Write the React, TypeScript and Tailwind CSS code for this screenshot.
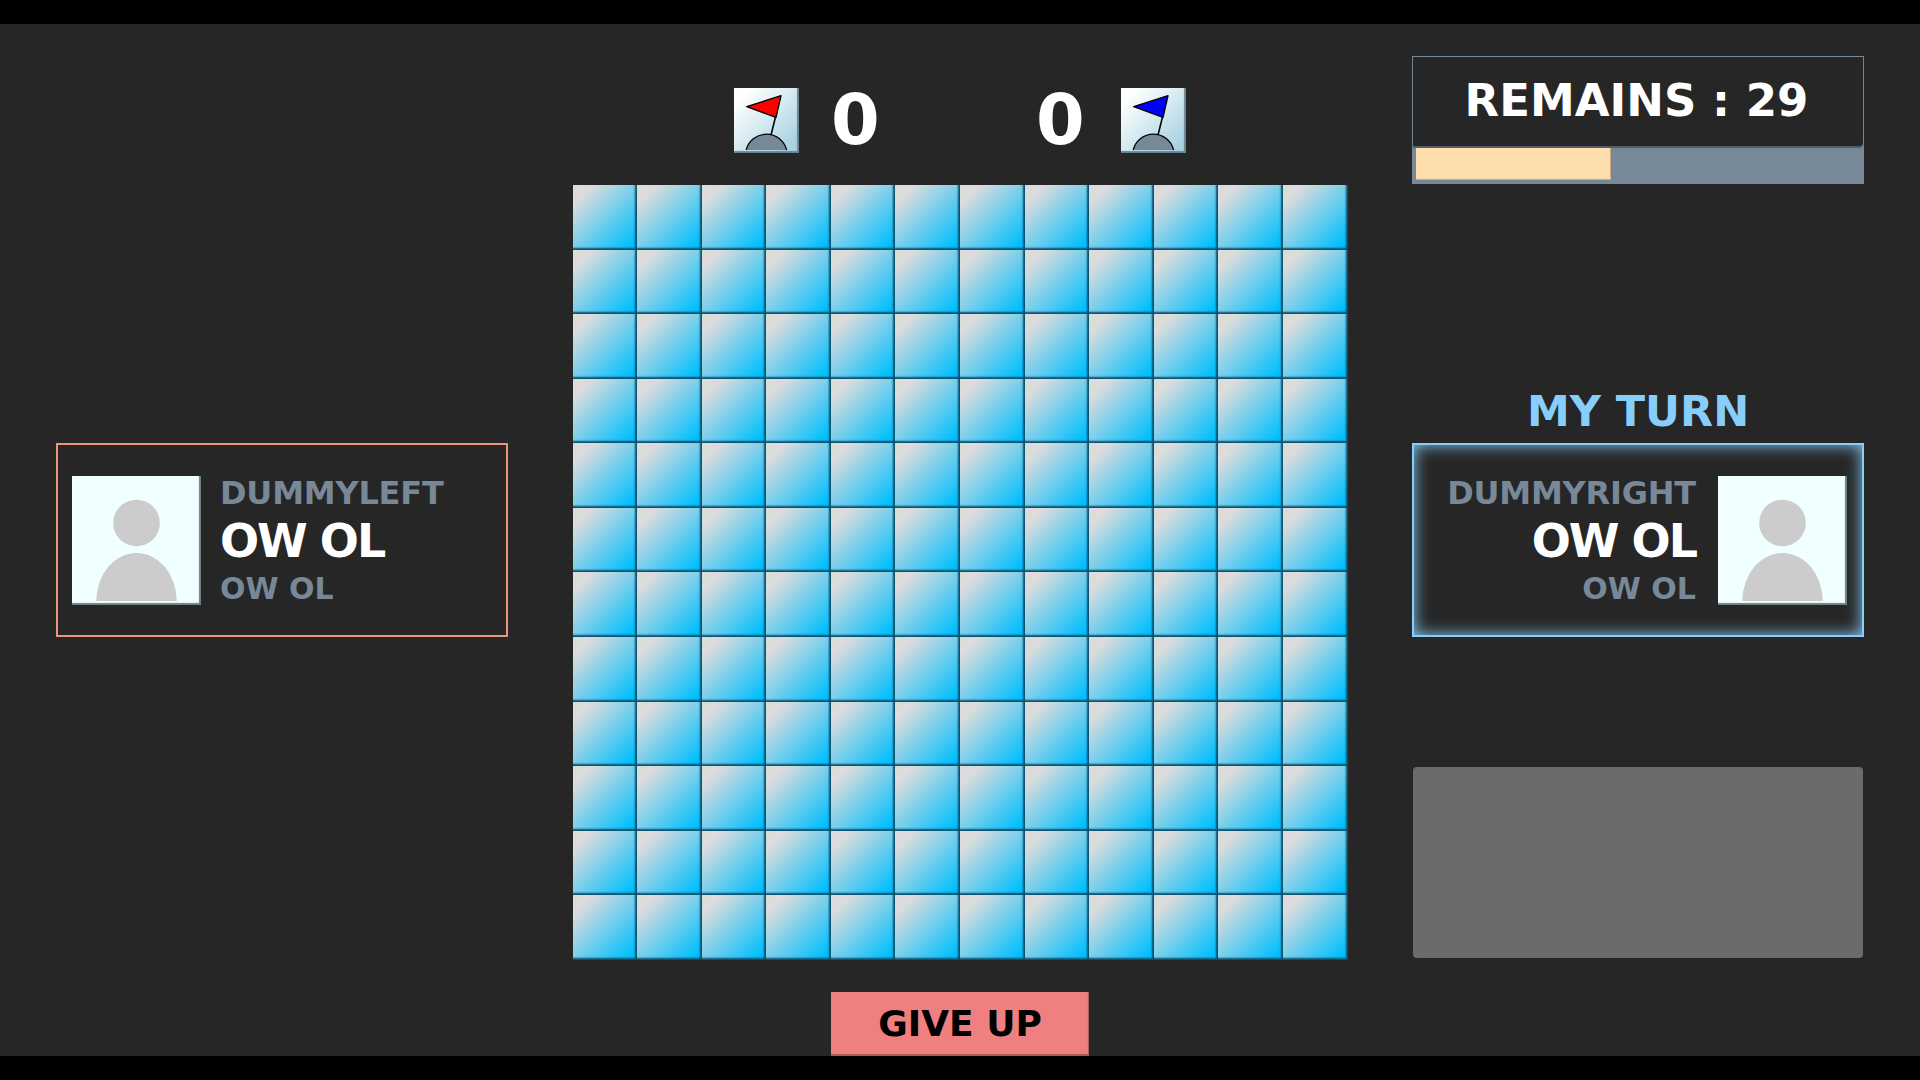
import React, { FC } from "react";

/* INTERFACES */
interface FlagProps {
  color: string;
}
interface PlayerCardProps {
  name: string;
  side: "left" | "right";
}

const CELLS = Array.from({ length: 144 }, (_, i) => i);

/* COMPONENTS */
const Flag: FC<FlagProps> = ({ color }) => (
  <div className="w-[65px] h-[65px] shrink-0 bg-[linear-gradient(135deg,#ffffff_12%,#a9d3e2_88%)] shadow-[inset_-2px_-2px_1px_#6b8590]">
    <svg viewBox="0 0 65 65" className="w-full h-full block">
      <path d="M12.2 62 A20.8 20.8 0 0 1 52.6 62 Z" fill="#778899" />
      <path d="M12.2 62 A20.8 20.8 0 0 1 52.6 62" fill="none" stroke="#000" strokeWidth="1.3" />
      <line x1="41.5" y1="29" x2="37" y2="47" stroke="#000" strokeWidth="1.5" />
      <path d="M12.7 18.7 L47 7.7 L42 29.3 Z" fill={color} stroke="#000" strokeWidth="1.4" strokeLinejoin="round" />
    </svg>
  </div>
);

const Avatar: FC = () => (
  <div className="w-[129px] h-[129px] shrink-0 bg-[#f0ffff] shadow-[inset_-2px_-2px_1px_#6f7f7f]">
    <svg viewBox="0 0 129 129" className="w-full h-full block">
      <circle cx="64.5" cy="47" r="23.3" fill="#cccccc" />
      <path d="M24.3 125 A40.2 48 0 0 1 104.7 125 Z" fill="#cccccc" />
    </svg>
  </div>
);

const PlayerCard: FC<PlayerCardProps> = ({ name, side }) => {
  const isLeft = side === "left";
  const Stats = (
    <div className={`flex-1 flex flex-col pt-px font-bold ${isLeft ? "items-start" : "items-end"}`}>
      <div className="h-[48px] leading-[48px] text-[32px] text-[#778899] tracking-[-0.2px]">{name}</div>
      <div className="h-[48px] leading-[48px] text-[46px] text-white tracking-[-2px]">OW OL</div>
      <div className="h-[48px] leading-[48px] text-[30px] text-[#778899]">OW OL</div>
    </div>
  );

  return (
    <div
      className={`w-[452px] h-[194px] flex items-center border-2 ${
        isLeft
          ? "border-[#e9967a] pl-[14px] pr-4 gap-[19px]"
          : "border-[#87cefa] pl-4 pr-[15px] gap-[22px] shadow-[inset_0_0_16px_#87cefa]"
      }`}
    >
      {isLeft && <Avatar />}
      {Stats}
      {!isLeft && <Avatar />}
    </div>
  );
};

export default function App() {
  return (
    <div className="w-full h-screen bg-black py-6 font-['DejaVu_Sans',sans-serif]">
      <div className="h-full bg-[#262626] flex">
        {/* left player */}
        <div className="w-[572px] pl-14 flex items-center">
          <PlayerCard name="DUMMYLEFT" side="left" />
        </div>

        {/* board */}
        <div className="w-[776px] flex flex-col items-center">
          <div className="h-[161px] pt-16 flex justify-center">
            <div className="flex items-start">
              <Flag color="#ff0000" />
              <div className="w-[48px] ml-8 h-[65px] leading-[65px] text-[70px] font-bold text-white text-center">0</div>
              <div className="w-[157px]" />
              <div className="w-[48px] mr-[37px] h-[65px] leading-[65px] text-[70px] font-bold text-white text-center">0</div>
              <Flag color="#0000ff" />
            </div>
          </div>
          <div className="grid grid-cols-12 w-[775px] h-[775px]">
            {CELLS.map((i) => (
              <div
                key={i}
                className="bg-[linear-gradient(135deg,#dcdcdc_15%,#00bfff_92%)] shadow-[inset_-2px_-2px_2px_#084f6b]"
              />
            ))}
          </div>
          <button className="mt-8 w-[258px] h-[64px] bg-[#f08080] text-black text-[36px] font-bold shadow-[inset_-1px_-2px_1px_#a85a5a]">
            GIVE UP
          </button>
        </div>

        {/* right player */}
        <div className="flex-1 pl-16 flex flex-col">
          <div className="mt-8 w-[452px] h-[128px] bg-[#778899] border border-[#778899] flex flex-col">
            <div className="h-[89px] pb-[2px] pr-[3px] bg-[#262626] rounded-br-sm flex items-center justify-center text-white text-[45px] font-bold shadow-[0_2px_1px_#4f5d6b]">
              REMAINS : 29
            </div>
            <div className="mt-[2px] ml-[3px] w-[195px] h-[32px] bg-[#ffdead] shadow-[inset_-1px_-1px_1px_#c9a877]" />
          </div>
          <div className="mt-[193px] h-[66px] pt-[3px] leading-[63px] text-center w-[452px] text-[43px] font-bold text-[#87cefa]">
            MY TURN
          </div>
          <PlayerCard name="DUMMYRIGHT" side="right" />
          <div className="mt-[130px] ml-px w-[450px] h-[191px] bg-[#6b6b6b] rounded-[4px]" />
        </div>
      </div>
    </div>
  );
}
